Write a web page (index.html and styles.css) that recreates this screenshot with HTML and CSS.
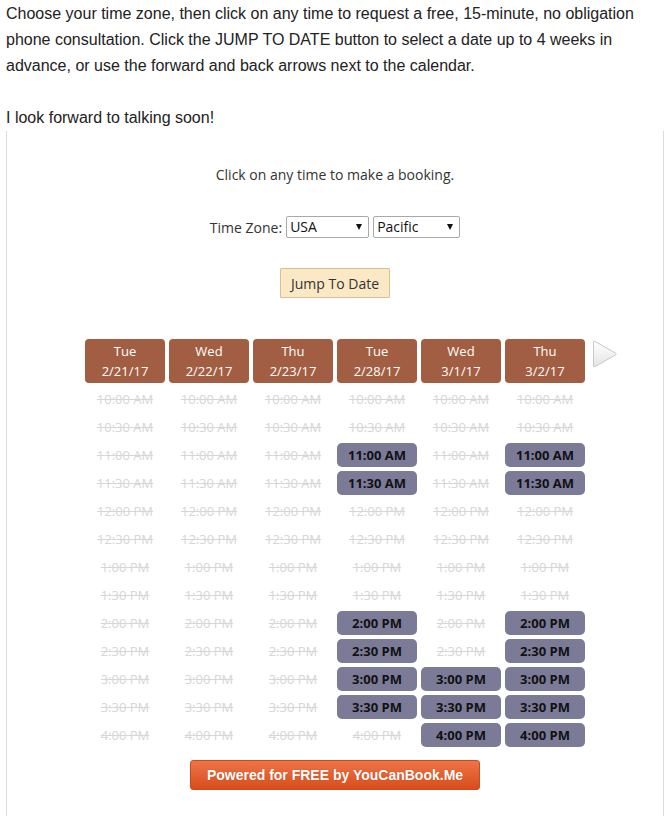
FILE: index.html
```html
<!DOCTYPE html>
<html>
<head>
  <link rel="stylesheet" href="styles.css">
</head>
<body>
  <p class="intro">Choose your time zone, then click on any time to request a free, 15-minute, no obligation phone consultation. Click the JUMP TO DATE button to select a date up to 4 weeks in advance, or use the forward and back arrows next to the calendar.<br><br>I look forward to talking soon!</p>

  <div class="booking-frame">
    <div class="booking-hint">Click on any time to make a booking.</div>

    <div class="tz-row">
      <span class="tz-label">Time Zone:</span>
      <span class="select-wrap tz-country">
        <select><option>USA</option></select>
      </span>
      <span class="select-wrap tz-zone">
        <select><option>Pacific</option></select>
      </span>
    </div>

    <button class="jump-btn">Jump To Date</button>

    <div class="calendar">
      <div class="days">
        <div class="day">
          <div class="day-head">Tue<br>2/21/17</div>
          <div class="slot">10:00 AM</div>
          <div class="slot">10:30 AM</div>
          <div class="slot">11:00 AM</div>
          <div class="slot">11:30 AM</div>
          <div class="slot">12:00 PM</div>
          <div class="slot">12:30 PM</div>
          <div class="slot">1:00 PM</div>
          <div class="slot">1:30 PM</div>
          <div class="slot">2:00 PM</div>
          <div class="slot">2:30 PM</div>
          <div class="slot">3:00 PM</div>
          <div class="slot">3:30 PM</div>
          <div class="slot">4:00 PM</div>
        </div>
        <div class="day">
          <div class="day-head">Wed<br>2/22/17</div>
          <div class="slot">10:00 AM</div>
          <div class="slot">10:30 AM</div>
          <div class="slot">11:00 AM</div>
          <div class="slot">11:30 AM</div>
          <div class="slot">12:00 PM</div>
          <div class="slot">12:30 PM</div>
          <div class="slot">1:00 PM</div>
          <div class="slot">1:30 PM</div>
          <div class="slot">2:00 PM</div>
          <div class="slot">2:30 PM</div>
          <div class="slot">3:00 PM</div>
          <div class="slot">3:30 PM</div>
          <div class="slot">4:00 PM</div>
        </div>
        <div class="day">
          <div class="day-head">Thu<br>2/23/17</div>
          <div class="slot">10:00 AM</div>
          <div class="slot">10:30 AM</div>
          <div class="slot">11:00 AM</div>
          <div class="slot">11:30 AM</div>
          <div class="slot">12:00 PM</div>
          <div class="slot">12:30 PM</div>
          <div class="slot">1:00 PM</div>
          <div class="slot">1:30 PM</div>
          <div class="slot">2:00 PM</div>
          <div class="slot">2:30 PM</div>
          <div class="slot">3:00 PM</div>
          <div class="slot">3:30 PM</div>
          <div class="slot">4:00 PM</div>
        </div>
        <div class="day">
          <div class="day-head">Tue<br>2/28/17</div>
          <div class="slot">10:00 AM</div>
          <div class="slot">10:30 AM</div>
          <div class="slot free">11:00 AM</div>
          <div class="slot free">11:30 AM</div>
          <div class="slot">12:00 PM</div>
          <div class="slot">12:30 PM</div>
          <div class="slot">1:00 PM</div>
          <div class="slot">1:30 PM</div>
          <div class="slot free">2:00 PM</div>
          <div class="slot free">2:30 PM</div>
          <div class="slot free">3:00 PM</div>
          <div class="slot free">3:30 PM</div>
          <div class="slot">4:00 PM</div>
        </div>
        <div class="day">
          <div class="day-head">Wed<br>3/1/17</div>
          <div class="slot">10:00 AM</div>
          <div class="slot">10:30 AM</div>
          <div class="slot">11:00 AM</div>
          <div class="slot">11:30 AM</div>
          <div class="slot">12:00 PM</div>
          <div class="slot">12:30 PM</div>
          <div class="slot">1:00 PM</div>
          <div class="slot">1:30 PM</div>
          <div class="slot">2:00 PM</div>
          <div class="slot">2:30 PM</div>
          <div class="slot free">3:00 PM</div>
          <div class="slot free">3:30 PM</div>
          <div class="slot free">4:00 PM</div>
        </div>
        <div class="day">
          <div class="day-head">Thu<br>3/2/17</div>
          <div class="slot">10:00 AM</div>
          <div class="slot">10:30 AM</div>
          <div class="slot free">11:00 AM</div>
          <div class="slot free">11:30 AM</div>
          <div class="slot">12:00 PM</div>
          <div class="slot">12:30 PM</div>
          <div class="slot">1:00 PM</div>
          <div class="slot">1:30 PM</div>
          <div class="slot free">2:00 PM</div>
          <div class="slot free">2:30 PM</div>
          <div class="slot free">3:00 PM</div>
          <div class="slot free">3:30 PM</div>
          <div class="slot free">4:00 PM</div>
        </div>
      </div>
      <!-- next week arrow -->
      <svg class="next-arrow" width="26" height="30" viewBox="0 0 26 30">
        <defs>
          <linearGradient id="arrowFill" x1="0" y1="0" x2="0" y2="1">
            <stop offset="0" stop-color="#ffffff"/>
            <stop offset="1" stop-color="#e4e4e4"/>
          </linearGradient>
        </defs>
        <path d="M1.5 2 Q1.5 0.6 3 1.4 L23.5 13.1 Q25 14 23.5 14.9 L3 26.6 Q1.5 27.4 1.5 26 Z" fill="url(#arrowFill)" stroke="#c8c8c8" stroke-width="1"/>
      </svg>
    </div>

    <button class="powered-btn">Powered for FREE by YouCanBook.Me</button>
  </div>
</body>
</html>
```

FILE: styles.css
```css
body {
  margin: 0;
  padding: 1px 5px 0 6px;
  font-family: "Liberation Sans", Arial, sans-serif;
  color: #222;
  background: #fff;
}
.intro {
  margin: 0;
  font-size: 16px;
  line-height: 26px;
}
.booking-frame {
  border-left: 1px solid #dcdcdc;
  border-right: 1px solid #dcdcdc;
  min-height: 651px;
  display: flex;
  flex-direction: column;
  align-items: center;
  padding-top: 34px;
  font-family: "Open Sans", sans-serif;
  color: #333;
}
.booking-hint {
  font-size: 14px;
  line-height: 20px;
}
/* Time zone row */
.tz-row {
  display: flex;
  align-items: center;
  margin-top: 31px;
  font-size: 14px;
}
.tz-label {
  margin-right: 4px;
}
.select-wrap {
  position: relative;
  display: inline-block;
  margin-right: 4px;
}
.select-wrap:last-child {
  margin-right: 0;
}
.select-wrap select {
  appearance: none;
  -webkit-appearance: none;
  height: 22px;
  padding: 0 0 0 3px;
  border: 1px solid #a9a9a9;
  border-radius: 2px;
  background: #fff;
  font-family: "Open Sans", sans-serif;
  font-size: 14px;
  color: #111;
  line-height: 20px;
}
.tz-country select {
  width: 83px;
}
.tz-zone select {
  width: 87px;
}
.select-wrap:after {
  content: "";
  position: absolute;
  right: 7px;
  top: 8px;
  border-left: 3.5px solid transparent;
  border-right: 3.5px solid transparent;
  border-top: 6px solid #111;
  pointer-events: none;
}
.jump-btn {
  margin-top: 30px;
  width: 110px;
  height: 30px;
  padding: 0;
  background: #fbe9c5;
  border: 1px solid #dac090;
  border-radius: 1px;
  font-family: "Open Sans", sans-serif;
  font-size: 14px;
  color: #333;
  cursor: pointer;
}
/* Calendar */
.calendar {
  position: relative;
  margin-top: 41px;
}
.days {
  display: flex;
  gap: 4px;
}
.day {
  display: flex;
  flex-direction: column;
  gap: 4px;
  width: 80px;
}
.day-head {
  background: #a25e42;
  color: #fff;
  border-radius: 4px;
  text-align: center;
  font-size: 13px;
  line-height: 20px;
  padding: 2px 0;
}
.slot {
  height: 24px;
  line-height: 24px;
  text-align: center;
  font-size: 13px;
  color: #d6d6d6;
  text-decoration: line-through;
}
.slot.free {
  background: #7b7b97;
  color: #111;
  font-weight: bold;
  text-decoration: none;
  border-radius: 5px;
  cursor: pointer;
}
.next-arrow {
  position: absolute;
  left: 507px;
  top: 1px;
}
.powered-btn {
  margin-top: 13px;
  width: 290px;
  height: 30px;
  padding: 0;
  border: 1px solid #cc4b1c;
  border-radius: 3px;
  background: linear-gradient(#ee7448, #d84d1b);
  color: #fff;
  font-family: "Liberation Sans", Arial, sans-serif;
  font-weight: bold;
  font-size: 14px;
  text-shadow: 0 0 1px rgba(120, 30, 0, 0.4);
  cursor: pointer;
}
```
